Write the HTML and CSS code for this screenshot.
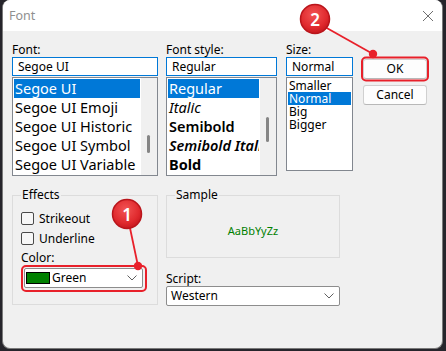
FILE: index.html
```html
<!DOCTYPE html>
<html>
<head>
<meta charset="utf-8">
<link rel="stylesheet" href="styles.css">
</head>
<body>
<div class="window">
  <div class="titlebar">
    <span class="title">Font</span>
    <svg class="close" width="12" height="12" viewBox="0 0 12 12"><path d="M1 1L11 11M11 1L1 11" stroke="#6f6f6f" stroke-width="1" fill="none"/></svg>
  </div>
  <div class="content">
    <div class="toprow">
      <div class="col col-font">
        <div class="lbl">Font:</div>
        <div class="input">Segoe UI</div>
        <div class="list big">
          <div class="items">
            <div class="item sel">Segoe UI</div>
            <div class="item">Segoe UI Emoji</div>
            <div class="item">Segoe UI Historic</div>
            <div class="item">Segoe UI Symbol</div>
            <div class="item">Segoe UI Variable</div>
          </div>
          <div class="track"><div class="thumb thumb-font"></div></div>
        </div>
      </div>
      <div class="col col-style">
        <div class="lbl">Font style:</div>
        <div class="input">Regular</div>
        <div class="list big">
          <div class="items">
            <div class="item sel">Regular</div>
            <div class="item it">Italic</div>
            <div class="item sb">Semibold</div>
            <div class="item sb it">Semibold Italic</div>
            <div class="item bd">Bold</div>
          </div>
          <div class="track"><div class="thumb thumb-style"></div></div>
        </div>
      </div>
      <div class="col col-size">
        <div class="lbl">Size:</div>
        <div class="input">Normal</div>
        <div class="list small">
          <div class="items">
            <div class="sitem">Smaller</div>
            <div class="sitem sel">Normal</div>
            <div class="sitem">Big</div>
            <div class="sitem">Bigger</div>
          </div>
        </div>
      </div>
      <div class="col col-btns">
        <div class="btn">OK</div>
        <div class="btn">Cancel</div>
      </div>
    </div>
    <div class="bottomrow">
      <fieldset class="group effects">
        <legend>Effects</legend>
        <div class="check"><span class="box"></span><span>Strikeout</span></div>
        <div class="check"><span class="box"></span><span>Underline</span></div>
        <div class="lbl color-lbl">Color:</div>
        <div class="combo color-combo">
          <span class="swatch"></span><span class="ctext">Green</span>
          <svg class="chev" width="10" height="6" viewBox="0 0 10 6"><path d="M0.5 0.5L5 5L9.5 0.5" stroke="#606060" fill="none"/></svg>
        </div>
      </fieldset>
      <div class="rightcol">
        <fieldset class="group sample">
          <legend>Sample</legend>
          <div class="sample-text">AaBbYyZz</div>
        </fieldset>
        <div class="lbl script-lbl">Script:</div>
        <div class="combo script-combo">
          <span class="ctext">Western</span>
          <svg class="chev" width="10" height="6" viewBox="0 0 10 6"><path d="M0.5 0.5L5 5L9.5 0.5" stroke="#606060" fill="none"/></svg>
        </div>
      </div>
    </div>
  </div>
</div>
<svg class="annot" width="446" height="351" viewBox="0 0 446 351">
  <defs>
    <radialGradient id="bg" cx="45%" cy="35%" r="65%">
      <stop offset="0" stop-color="#f25454"/>
      <stop offset="0.7" stop-color="#e02a2e"/>
      <stop offset="1" stop-color="#c8181e"/>
    </radialGradient>
  </defs>
  <rect x="362" y="57.5" width="66" height="23" rx="4" fill="none" stroke="#e8202a" stroke-width="2"/>
  <rect x="22" y="266" width="124" height="25" rx="4" fill="none" stroke="#e8202a" stroke-width="2"/>
  <line x1="325" y1="27" x2="373" y2="54" stroke="#e8202a" stroke-width="1.8"/>
  <circle cx="373" cy="54" r="4.2" fill="#e8202a"/>
  <line x1="130" y1="228" x2="138" y2="266" stroke="#e8202a" stroke-width="1.8"/>
  <circle cx="138" cy="266" r="4.2" fill="#e8202a"/>
  <circle cx="315" cy="19" r="14.5" fill="url(#bg)" stroke="#b9151b" stroke-width="1.5"/>
  <text x="315" y="25.5" class="badge-t">2</text>
  <circle cx="127" cy="214" r="14.5" fill="url(#bg)" stroke="#b9151b" stroke-width="1.5"/>
  <text x="127" y="220.5" class="badge-t">1</text>
</svg>
</body>
</html>
```
FILE: styles.css
```css
html, body {
  margin: 0;
  padding: 0;
}
body {
  width: 446px;
  height: 351px;
  overflow: hidden;
  background: #26252b;
  font-family: "Noto Sans", "Open Sans", sans-serif;
  font-size: 12px;
  color: #000;
  position: relative;
}
.window {
  margin-left: 2px;
  width: 441px;
  height: 349px;
  box-sizing: border-box;
  border: 1px solid #7a7a7a;
  border-top: none;
  border-radius: 8px;
  overflow: hidden;
  background: #f0f0f0;
}
.titlebar {
  height: 31px;
  background: #fff;
  display: flex;
  align-items: center;
  justify-content: space-between;
  padding: 0 8px 0 6px;
}
.title {
  color: #8f8f8f;
  font-size: 12.5px;
}
.close {
  display: block;
}
.content {
  padding: 11px 0 0 9px;
}
.toprow {
  display: flex;
  align-items: flex-start;
}
.col-font { width: 146px; }
.col-style { width: 111px; margin-left: 8px; }
.col-size { width: 67px; margin-left: 9px; }
.col-btns {
  width: 64px;
  margin-left: 10px;
  padding-top: 17px;
  display: flex;
  flex-direction: column;
  gap: 6px;
}
.lbl {
  height: 15px;
  line-height: 15px;
  white-space: nowrap;
}
.input {
  height: 19px;
  box-sizing: border-box;
  border: 1px solid #0078d7;
  background: #fff;
  padding-left: 5px;
  line-height: 17px;
  white-space: nowrap;
}
.list {
  box-sizing: border-box;
  border: 1px solid #82878f;
  background: #fff;
  display: flex;
  overflow: hidden;
  margin-top: 1px;
}
.list.big { height: 99px; }
.list.small { height: 94px; }
.items {
  flex: 1;
  padding: 1px;
  min-width: 0;
  overflow: hidden;
}
.item {
  height: 19px;
  line-height: 19px;
  font-size: 14.5px;
  padding-left: 1px;
  white-space: nowrap;
  overflow: hidden;
}
.item.sel, .sitem.sel {
  background: #0078d7;
  color: #fff;
}
.it { font-style: italic; }
.sb { font-weight: 600; }
.bd { font-weight: 700; }
.sitem {
  height: 13px;
  line-height: 13px;
  font-size: 12px;
  padding-left: 1px;
  white-space: nowrap;
}
.track {
  width: 16px;
  background: #f0f0f0;
  position: relative;
}
.thumb {
  position: absolute;
  left: 6px;
  width: 3px;
  border-radius: 2px;
  background: #858585;
}
.thumb-font { top: 57px; height: 18px; }
.thumb-style { top: 39px; height: 25px; }
.btn {
  height: 20px;
  box-sizing: border-box;
  border: 1px solid #d0d0d0;
  border-bottom-color: #b8b8b8;
  border-radius: 3px;
  background: #fdfdfd;
  text-align: center;
  line-height: 18px;
}
.bottomrow {
  display: flex;
  align-items: flex-start;
  margin-top: 12px;
}
.group {
  margin: 0;
  box-sizing: border-box;
  border: 1px solid #dcdcdc;
  padding: 0 0 0 8px;
  min-width: 0;
}
.group legend {
  padding: 0 1px;
  line-height: 14px;
  height: 14px;
}
.effects {
  width: 146px;
  height: 117px;
}
.check {
  display: flex;
  align-items: center;
  height: 20px;
  gap: 5px;
}
.check:first-of-type {
  margin-top: 6px;
}
.box {
  width: 11px;
  height: 11px;
  border: 1px solid #4a4a4a;
  border-radius: 2px;
  background: #f7f7f7;
}
.color-lbl {
  margin-top: 3px;
  height: 14px;
  line-height: 14px;
}
.combo {
  height: 20px;
  box-sizing: border-box;
  border: 1px solid #8d8d8d;
  border-radius: 2px;
  background: #fff;
  display: flex;
  align-items: center;
  position: relative;
}
.color-combo {
  margin-top: 3px;
  margin-left: 3px;
  width: 119px;
  padding-left: 1px;
}
.swatch {
  width: 22px;
  height: 10px;
  border: 1px solid #000;
  background: #008000;
  margin-right: 2px;
}
.ctext {
  flex: 1;
  line-height: 18px;
}
.chev {
  margin-right: 5px;
}
.rightcol {
  width: 174px;
  margin-left: 8px;
}
.sample {
  width: 174px;
  height: 70px;
  display: flex;
  align-items: center;
  justify-content: center;
}
.sample-text {
  color: #008000;
  font-size: 11px;
  margin-left: -8px;
  margin-top: 2px;
}
.script-lbl {
  margin-top: 13px;
  height: 15px;
}
.script-combo {
  padding-left: 4px;
}
.annot {
  position: absolute;
  left: 0;
  top: 0;
  pointer-events: none;
}
.badge-t {
  fill: #fff;
  font-family: "Noto Sans", sans-serif;
  font-size: 17px;
  font-weight: 600;
  text-anchor: middle;
}
```
